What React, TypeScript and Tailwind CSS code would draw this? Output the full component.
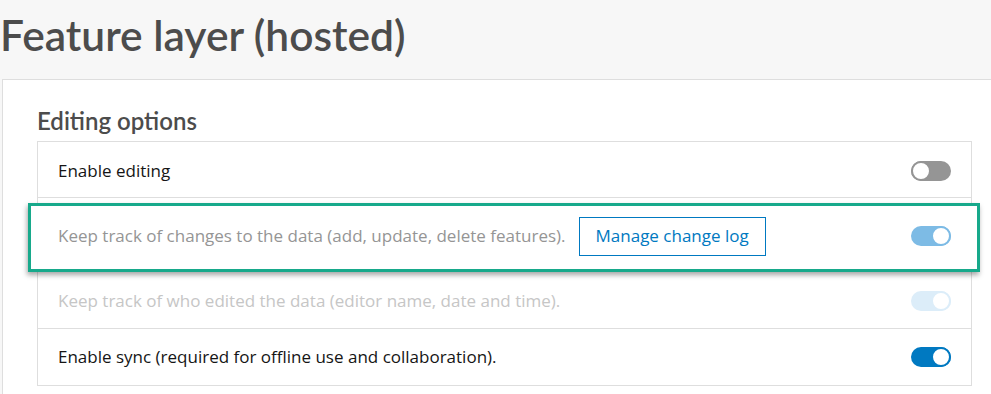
import React from "react";

type Tone = "off" | "soft" | "faint" | "on";

const tracks: Record<Tone, string> = {
  off: "bg-[#959595] justify-start",
  soft: "bg-[#7dbbe5] justify-end",
  faint: "bg-[#dcedf9] justify-end",
  on: "bg-[#0079c1] justify-end",
};

const knobs: Record<Tone, string> = {
  off: "border-[#959595]",
  soft: "border-[#7dbbe5]",
  faint: "border-[#dcedf9]",
  on: "border-[#0079c1]",
};

function Switch({ tone }: { tone: Tone }) {
  return (
    <div className={`flex h-[20px] w-[40px] shrink-0 items-center rounded-full ${tracks[tone]}`}>
      <div className={`h-[20px] w-[20px] rounded-full border-[2px] bg-white ${knobs[tone]}`} />
    </div>
  );
}

const body = "font-['Open_Sans',sans-serif] text-[17px]";

export default function App() {
  return (
    <div className="h-[394px] w-[991px] overflow-hidden bg-[#f7f7f7] font-['Lato',sans-serif]">
      <div className="flex h-[79px] items-center pb-[8px]">
        <h1 className="text-[42.5px] font-semibold leading-none text-[#4c4c4c]">
          Feature layer (hosted)
        </h1>
      </div>

      <div className="ml-[2px] h-[315px] border-l border-t border-[#dedede] bg-white pl-[34px] pr-[19px]">
        <h2 className="pt-[26px] text-[24px] font-semibold leading-[30px] text-[#4c4c4c]">
          Editing options
        </h2>

        <div className="mt-[5px] border border-[#dedede]">
          {/* enable editing */}
          <div className="flex h-[56px] items-center justify-between border-b border-[#dedede] px-[20px] pt-[2px]">
            <span className={`${body} text-[#151515]`}>Enable editing</span>
            <Switch tone="off" />
          </div>

          {/* change tracking, highlighted */}
          <div className="relative flex h-[74px] items-center justify-between border-b border-[#dedede] px-[20px] pt-[3px]">
            <div className="absolute -left-[10px] -right-[9px] top-[5px] bottom-[-1px] border-[3px] border-[#17a98b] bg-white shadow-[-1px_3px_5px_rgba(0,0,0,0.35)]" />
            <div className="relative flex items-center gap-[13px]">
              <span className={`${body} text-[#959595]`}>
                Keep track of changes to the data (add, update, delete features).
              </span>
              <button className={`${body} h-[39px] border border-[#0079c1] px-[16px] text-[#0079c1]`}>
                Manage change log
              </button>
            </div>
            <div className="relative">
              <Switch tone="soft" />
            </div>
          </div>

          {/* editor tracking, disabled */}
          <div className="flex h-[57px] items-center justify-between border-b border-[#dedede] px-[20px] pt-[2px]">
            <span className={`${body} text-[#c6c6c6]`}>
              Keep track of who edited the data (editor name, date and time).
            </span>
            <Switch tone="faint" />
          </div>

          {/* sync */}
          <div className="flex h-[56px] items-center justify-between px-[20px]">
            <span className={`${body} text-[#151515]`}>
              Enable sync (required for offline use and collaboration).
            </span>
            <Switch tone="on" />
          </div>
        </div>
      </div>
    </div>
  );
}
